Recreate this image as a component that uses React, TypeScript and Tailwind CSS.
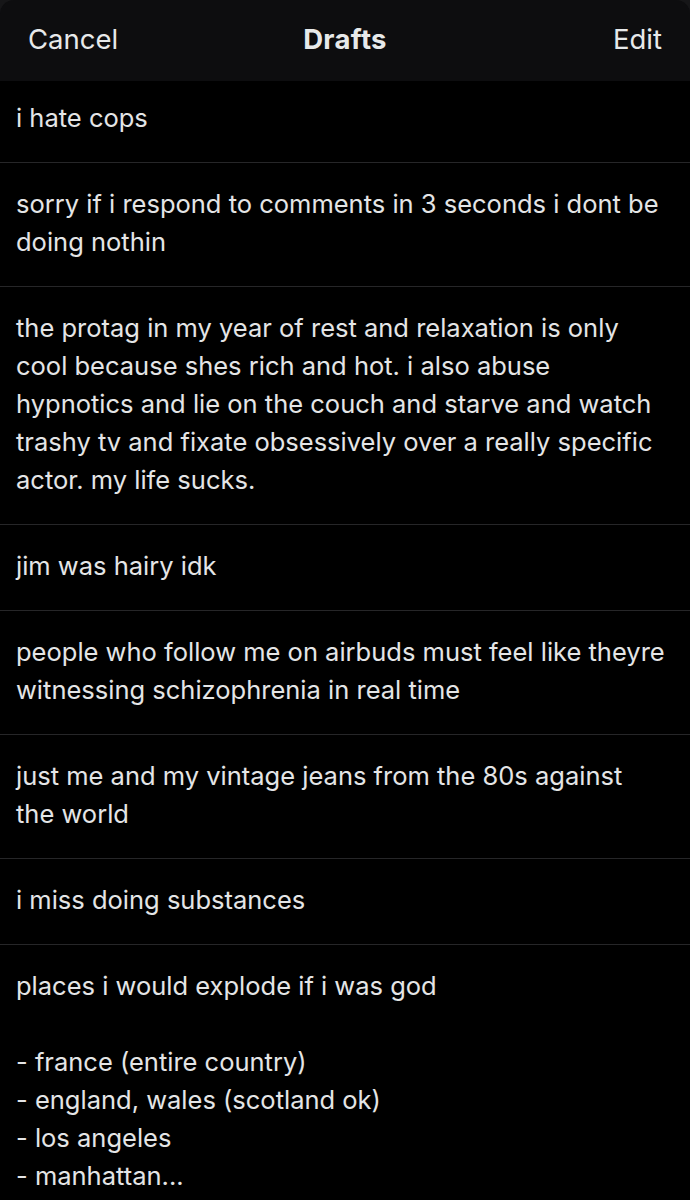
import React from "react";

// line breaks follow the screenshot so wrapping doesn't depend on font metrics
const drafts: string[] = [
  "i hate cops",
  "sorry if i respond to comments in 3 seconds i dont be\ndoing nothin",
  "the protag in my year of rest and relaxation is only\ncool because shes rich and hot. i also abuse\nhypnotics and lie on the couch and starve and watch\ntrashy tv and fixate obsessively over a really specific\nactor. my life sucks.",
  "jim was hairy idk",
  "people who follow me on airbuds must feel like theyre\nwitnessing schizophrenia in real time",
  "just me and my vintage jeans from the 80s against\nthe world",
  "i miss doing substances",
  "places i would explode if i was god\n\n- france (entire country)\n- england, wales (scotland ok)\n- los angeles\n- manhattan...",
];

export default function App() {
  return (
    <div
      className="w-[690px] h-[1200px] overflow-hidden bg-[#161618] flex flex-col"
      style={{ fontFamily: "Inter, 'Liberation Sans', sans-serif" }}
    >
      {/* Header */}
      <header className="h-[81px] shrink-0 rounded-t-[14px] bg-[#0d0d0f] grid grid-cols-3 items-center pl-[28px] pr-[28px] pb-[1px] text-[#e7e9ea] text-[27.5px]">
        <span>Cancel</span>
        <span className="font-bold text-center tracking-[0.3px]">Drafts</span>
        <span className="text-right">Edit</span>
      </header>

      {/* List */}
      <main className="flex-1 bg-black">
        {drafts.map((text, i) => (
          <div
            key={i}
            className={`px-4 text-[25.5px] leading-[38px] text-[#e4e5e6] whitespace-pre-line border-b border-[#262628] ${
              i === 0 ? "pt-[18px] pb-[25px]" : "pt-[22px] pb-[25px]"
            }`}
          >
            {text}
          </div>
        ))}
      </main>
    </div>
  );
}
